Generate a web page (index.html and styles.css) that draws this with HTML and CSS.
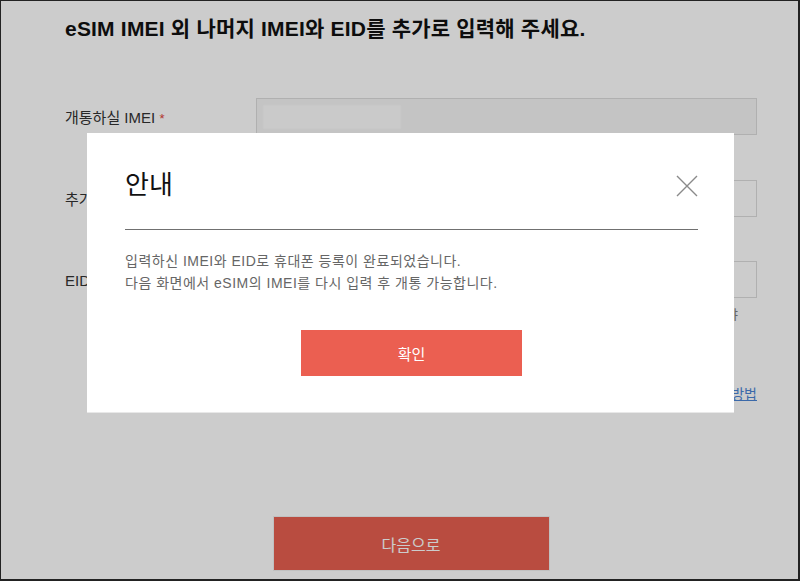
FILE: index.html
```html
<!DOCTYPE html>
<html lang="ko">
<head>
    <meta charset="UTF-8">
    <meta name="viewport" content="width=device-width, initial-scale=1.0">
    <title>eSIM 추가 정보 입력</title>
    <link rel="stylesheet" href="styles.css">
</head>
<body>
    <div class="page">
        <h1 class="title">eSIM IMEI 외 나머지 IMEI와 EID를 추가로 입력해 주세요.</h1>

        <div class="form">
            <div class="row">
                <label class="label">개통하실 IMEI <span class="req">*</span></label>
                <div class="field">
                    <div class="input readonly"><span class="masked"></span></div>
                </div>
            </div>
            <div class="row">
                <label class="label" for="imei2">추가 IMEI</label>
                <div class="field">
                    <input type="text" id="imei2" class="input">
                </div>
            </div>
            <div class="row">
                <label class="label" for="eid">EID</label>
                <div class="field">
                    <input type="text" id="eid" class="input">
                </div>
            </div>
            <p class="note">EID는 32자리 숫자로 입력하셔야</p>
        </div>

        <div class="guide"><a href="#">IMEI/EID 확인 방법</a></div>

        <div class="actions">
            <button class="btn-next">다음으로</button>
        </div>
    </div>

    <div class="dim"></div>

    <div class="modal">
        <div class="modal-head">
            <h2 class="modal-title">안내</h2>
            <button class="modal-close" aria-label="닫기">
                <svg width="22" height="22" viewBox="0 0 22 22">
                    <path d="M1 1 L21 21 M21 1 L1 21" stroke="#8a8a8a" stroke-width="1.4" fill="none"/>
                </svg>
            </button>
        </div>
        <p class="modal-text">입력하신 IMEI와 EID로 휴대폰 등록이 완료되었습니다.<br>다음 화면에서 eSIM의 IMEI를 다시 입력 후 개통 가능합니다.</p>
        <div class="modal-actions">
            <button class="btn-ok">확인</button>
        </div>
    </div>
</body>
</html>
```

FILE: styles.css
```css
* {
    box-sizing: border-box;
}
html, body {
    margin: 0;
    padding: 0;
}
body {
    font-family: "Liberation Sans", "Noto Sans CJK KR", sans-serif;
    background: #fff;
    color: #333;
}
.page {
    height: 100vh;
    border: 1px solid #2b2b2b;
    border-right-width: 2px;
    border-bottom-width: 2px;
    padding: 0 41px 0 64px;
    overflow: hidden;
}
.title {
    margin: 14px 0 0;
    font-size: 21px;
    line-height: 28px;
    font-weight: bold;
    color: #111;
    letter-spacing: 0.2px;
}
.form {
    margin-top: 55px;
}
.row {
    display: flex;
    align-items: center;
    height: 37px;
    margin-bottom: 45px;
}
.row:nth-child(2) {
    margin-bottom: 44px;
}
.row:nth-child(3) {
    margin-bottom: 0;
}
.label {
    width: 191px;
    flex-shrink: 0;
    font-size: 15px;
    line-height: 20px;
    color: #333;
    padding-top: 3px;
}
.req {
    color: #e0413a;
    font-size: 13px;
}
.field {
    flex: 1;
}
.input {
    display: block;
    width: 100%;
    height: 37px;
    border: 1px solid #dcdcdc;
    background: #fff;
    font: inherit;
    padding: 6px;
}
.input.readonly {
    background: #f5f5f5;
}
.masked {
    display: block;
    width: 138px;
    height: 24px;
    background: #fdfdfd;
    filter: blur(1px);
}
.note {
    margin: 8px 0 0;
    padding-right: 19px;
    text-align: right;
    font-size: 13px;
    line-height: 18px;
    color: #808080;
}
.guide {
    margin-top: 60px;
    text-align: right;
    font-size: 14px;
    line-height: 20px;
}
.guide a {
    color: #4a84d4;
    text-decoration: underline;
}
.actions {
    display: flex;
    justify-content: center;
    margin-top: 112px;
}
.btn-next {
    width: 277px;
    height: 55px;
    border: 1px solid #f0f0f0;
    background: #e85f50;
    color: #fff;
    font-family: inherit;
    font-size: 16px;
}
.dim {
    position: fixed;
    inset: 0;
    background: rgba(0, 0, 0, 0.2);
}
.modal {
    position: fixed;
    left: 87px;
    top: 133px;
    width: 647px;
    height: 280px;
    background: #fff;
    border-bottom: 1px solid #e8e8e8;
    padding: 34px 36px 0 38px;
}
.modal-head {
    display: flex;
    justify-content: space-between;
    align-items: flex-start;
    border-bottom: 1px solid #707070;
    padding-bottom: 26px;
}
.modal-title {
    margin: 0;
    font-size: 26px;
    line-height: 36px;
    font-weight: normal;
    color: #111;
}
.modal-close {
    border: 0;
    background: none;
    padding: 0;
    margin-top: 8px;
    width: 22px;
    height: 22px;
}
.modal-close svg {
    display: block;
}
.modal-text {
    margin: 20px 0 0;
    font-size: 14px;
    line-height: 22px;
    letter-spacing: 0.5px;
    color: #666;
}
.modal-actions {
    display: flex;
    justify-content: center;
    margin-top: 36px;
}
.btn-ok {
    width: 221px;
    height: 46px;
    border: 0;
    background: #eb5f51;
    color: #fff;
    font-family: inherit;
    font-size: 15px;
}
```
